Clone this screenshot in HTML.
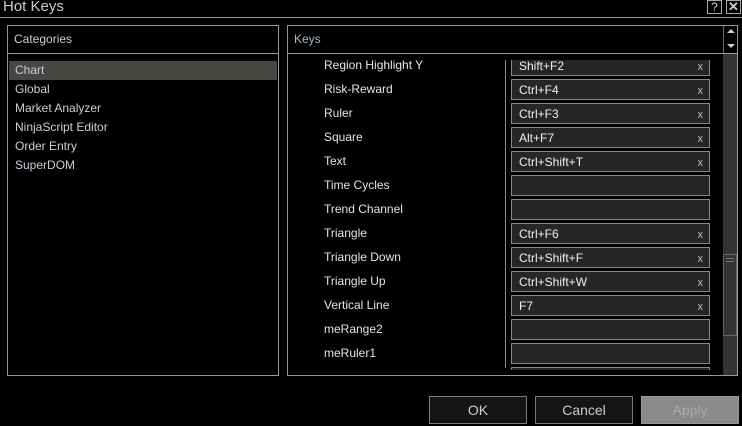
<!DOCTYPE html>
<html><head><style>
*{margin:0;padding:0;box-sizing:border-box}
body{width:742px;height:426px;background:#000;position:relative;overflow:hidden;font-family:"Liberation Sans",sans-serif;font-size:12px;color:#ddd}
.a{position:absolute}
.row{position:absolute;left:324px;color:#e4e4e4;font-size:12px}
.in{position:absolute;left:511px;width:199px;height:21px;border:1px solid #8a8a8a;background:#262626;color:#f0f0f0;font-size:12px;padding:3px 0 0 7px}
.in span{position:absolute;right:6px;top:5px;font-size:11px;color:#bbb}
.btn{position:absolute;top:396px;width:98px;height:28px;border:1px solid #7a7a7a;background:#141414;color:#ccc;font-size:14px;text-align:center;line-height:26px}
.cat{position:absolute;left:15px;color:#c8d0d8;font-size:12px}
</style></head><body>
<div class="a" style="left:3px;top:-2px;font-size:15px;color:#ccc">Hot Keys</div>
<div class="a" style="left:707px;top:0;width:15px;height:14px;border:1px solid #aaa;color:#ccc;font-size:12px;text-align:center;line-height:12px">?</div>
<div class="a" style="left:726px;top:0;width:15px;height:14px;border:1px solid #aaa;color:#ccc;font-size:13px;font-weight:bold;text-align:center;line-height:12px">✕</div>
<div class="a" style="left:0;top:17px;width:742px;height:1px;background:#999"></div>

<div class="a" style="left:7px;top:25px;width:272px;height:351px;border:1px solid #999"></div>
<div class="a" style="left:8px;top:53px;width:270px;height:1px;background:#999"></div>
<div class="a" style="left:14px;top:32px;color:#c8d0d8">Categories</div>
<div class="a" style="left:9px;top:61px;width:268px;height:19px;background:#464642"></div>
<div class="cat" style="top:63px">Chart</div>
<div class="cat" style="top:82px">Global</div>
<div class="cat" style="top:101px">Market Analyzer</div>
<div class="cat" style="top:120px">NinjaScript Editor</div>
<div class="cat" style="top:139px">Order Entry</div>
<div class="cat" style="top:158px">SuperDOM</div>

<div class="a" style="left:287px;top:25px;width:451px;height:351px;border:1px solid #999"></div>
<div class="a" style="left:288px;top:53px;width:449px;height:1px;background:#999"></div>
<div class="a" style="left:723px;top:26px;width:1px;height:27px;background:#666"></div>
<div class="a" style="left:727px;top:29px;width:0;height:0;border-left:4px solid transparent;border-right:4px solid transparent;border-bottom:4px solid #ccc"></div>
<div class="a" style="left:727px;top:44px;width:0;height:0;border-left:4px solid transparent;border-right:4px solid transparent;border-top:4px solid #ccc"></div>
<div class="a" style="left:294px;top:32px;color:#a8b8c8">Keys</div>
<div class="a" style="left:723px;top:54px;width:14px;height:321px;background:#333"></div>
<div class="a" style="left:723px;top:254px;width:14px;height:82px;border:1px solid #666;background:#333"></div>
<div class="a" style="left:726px;top:258px;width:8px;height:1px;background:#777"></div>
<div class="a" style="left:726px;top:261px;width:8px;height:1px;background:#777"></div>

<div class="a" style="left:288px;top:54px;width:434px;height:321px;overflow:hidden">
<div class="a" style="left:217px;top:6px;width:1px;height:308px;background:#888"></div>
</div>
<div class="a" style="left:288px;top:60px;width:434px;height:310px;overflow:hidden">
<div style="position:absolute;left:-288px;top:-60px;width:742px;height:426px">
<div class="row" style="top:58px">Region Highlight Y</div><div class="in" style="top:55px">Shift+F2<span>x</span></div>
<div class="row" style="top:82px">Risk-Reward</div><div class="in" style="top:79px">Ctrl+F4<span>x</span></div>
<div class="row" style="top:106px">Ruler</div><div class="in" style="top:103px">Ctrl+F3<span>x</span></div>
<div class="row" style="top:130px">Square</div><div class="in" style="top:127px">Alt+F7<span>x</span></div>
<div class="row" style="top:154px">Text</div><div class="in" style="top:151px">Ctrl+Shift+T<span>x</span></div>
<div class="row" style="top:178px">Time Cycles</div><div class="in" style="top:175px"></div>
<div class="row" style="top:202px">Trend Channel</div><div class="in" style="top:199px"></div>
<div class="row" style="top:226px">Triangle</div><div class="in" style="top:223px">Ctrl+F6<span>x</span></div>
<div class="row" style="top:250px">Triangle Down</div><div class="in" style="top:247px">Ctrl+Shift+F<span>x</span></div>
<div class="row" style="top:274px">Triangle Up</div><div class="in" style="top:271px">Ctrl+Shift+W<span>x</span></div>
<div class="row" style="top:298px">Vertical Line</div><div class="in" style="top:295px">F7<span>x</span></div>
<div class="row" style="top:322px">meRange2</div><div class="in" style="top:319px"></div>
<div class="row" style="top:346px">meRuler1</div><div class="in" style="top:343px"></div>
<div class="in" style="top:367px"></div>
</div></div>

<div class="btn" style="left:429px">OK</div>
<div class="btn" style="left:535px">Cancel</div>
<div class="btn" style="left:641px;background:#8a8a8a;border-color:#9a9a9a;color:#aaa">Apply</div>
</body></html>
